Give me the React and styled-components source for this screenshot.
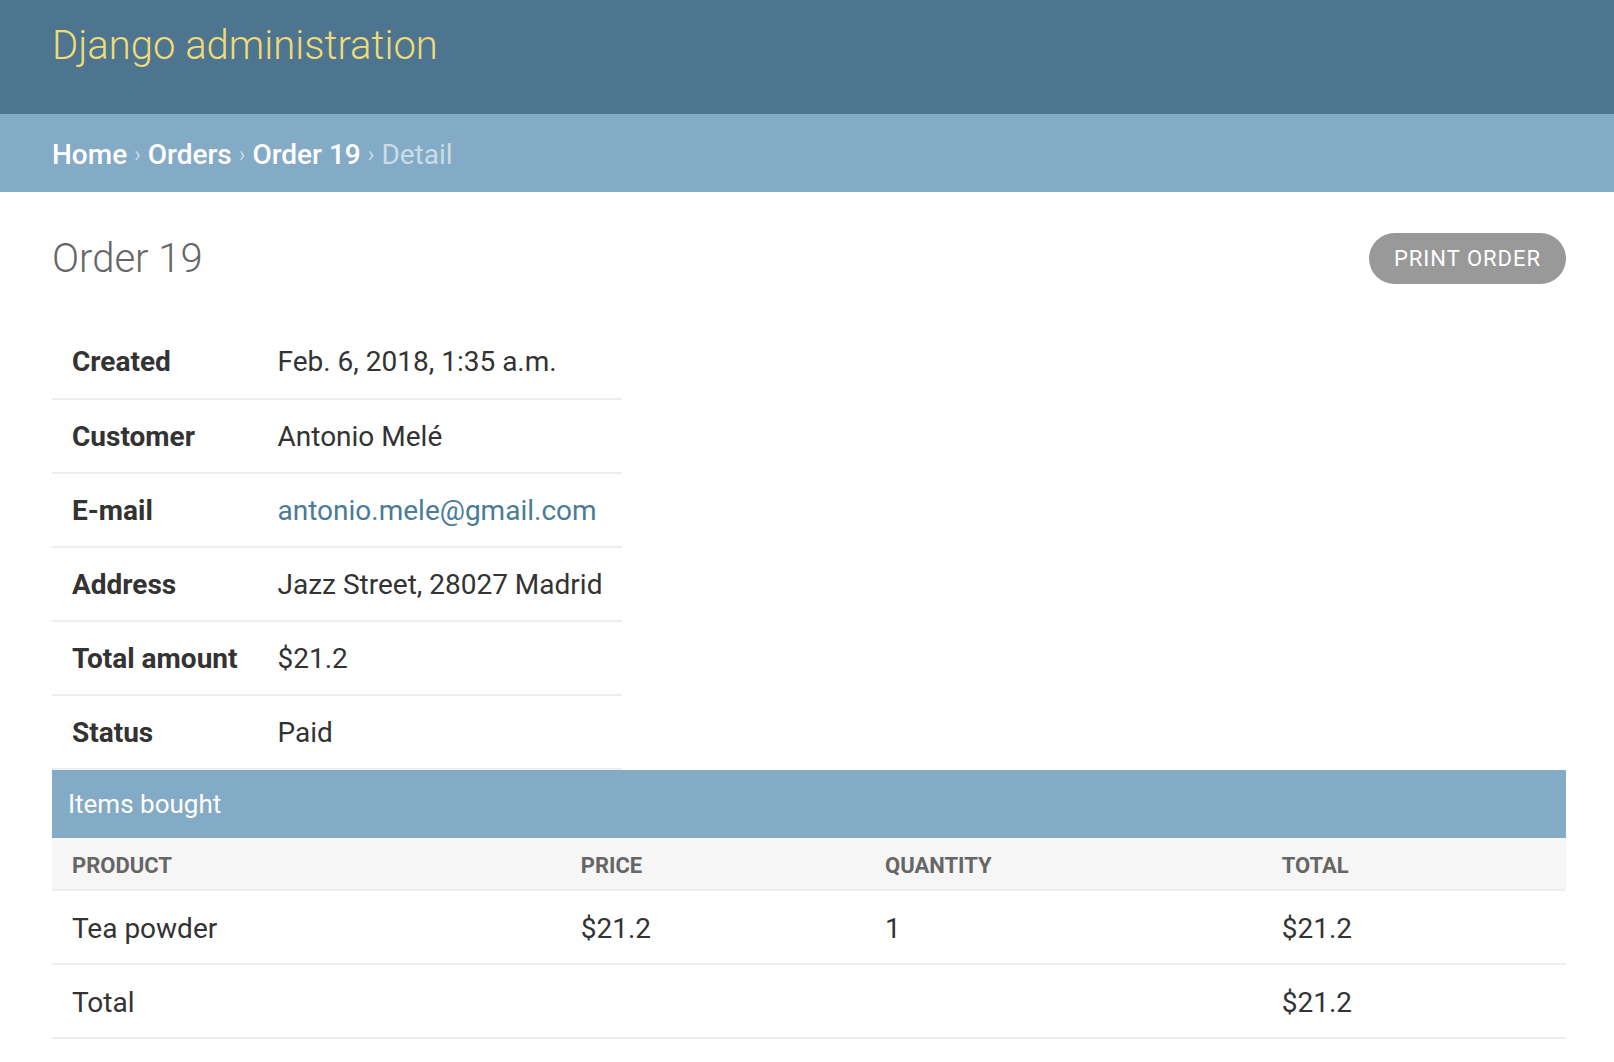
import React from "react";
import styled, { createGlobalStyle } from "styled-components";

const GlobalStyle = createGlobalStyle`
    html, body {
        margin: 0;
        padding: 0;
        background: #ffffff;
    }
    body {
        font-family: Roboto, "Liberation Sans", sans-serif;
        color: #333333;
    }
`

const Header = styled.header`
    display: flex;
    align-items: flex-start;
    height: 114px;
    padding: 0 52px;
    background-color: #4d7590;
    box-sizing: border-box;

    h1{
        margin: 19px 0 0 0;
        font-size: 40px;
        font-weight: 300;
        color: #f0db77;
        line-height: 54px;
    }
`

const Breadcrumbs = styled.nav`
    display: flex;
    align-items: center;
    gap: 7px;
    height: 78px;
    padding: 2px 52px 0;
    background-color: #84abc6;
    box-sizing: border-box;
    font-size: 28px;
    color: #c8dce9;

    a{
        color: #ffffff;
        text-decoration: none;
        font-weight: 500;
    }
    .sep{
        font-size: 22px;
    }
    .current{
        color: #c8dce9;
    }
`

const Content = styled.main`
    padding: 0 48px 0 52px;
`

const TitleRow = styled.div`
    display: flex;
    justify-content: space-between;
    align-items: center;
    height: 132px;

    h1{
        margin: 0;
        font-size: 40px;
        font-weight: 300;
        color: #666666;
    }
`

const PrintButton = styled.a`
    display: inline-flex;
    align-items: center;
    justify-content: center;
    height: 51px;
    width: 197px;
    border-radius: 26px;
    background-color: #999999;
    color: #ffffff;
    font-size: 22px;
    letter-spacing: 1px;
    text-transform: uppercase;
    text-decoration: none;
`

const DetailTable = styled.table`
    border-collapse: collapse;
    font-size: 28px;

    th, td{
        height: 72px;
        padding: 0 20px;
        text-align: left;
        border-bottom: 2px solid #eeeeee;
        white-space: nowrap;
    }
    th{
        font-weight: 700;
        color: #333333;
    }
    tr:first-child th, tr:first-child td{
        height: 74px;
    }
    a{
        color: #4a7b98;
        text-decoration: none;
    }
`

const ItemsTable = styled.table`
    width: 100%;
    border-collapse: collapse;
    font-size: 28px;

    caption{
        height: 68px;
        padding: 0 16px;
        text-align: left;
        background-color: #84abc6;
        color: #ffffff;
        font-size: 26px;
        line-height: 68px;
        caption-side: top;
    }
    thead th{
        height: 47px;
        padding: 4px 20px 0;
        background-color: #f6f6f6;
        color: #666666;
        font-size: 22px;
        font-weight: 700;
        text-transform: uppercase;
        text-align: left;
        border-bottom: 2px solid #eeeeee;
    }
    td{
        height: 70px;
        padding: 2px 20px 0;
        border-bottom: 2px solid #eeeeee;
        color: #333333;
    }
`

const details = [
    ["Created", "Feb. 6, 2018, 1:35 a.m."],
    ["Customer", "Antonio Melé"],
    ["E-mail", "antonio.mele@gmail.com", true],
    ["Address", "Jazz Street, 28027 Madrid"],
    ["Total amount", "$21.2"],
    ["Status", "Paid"],
]

const columns = [
    ["Product", "33.6%"],
    ["Price", "20.1%"],
    ["Quantity", "26.2%"],
    ["Total", "20.1%"],
]

const App = () => {
    return (
        <>
            <GlobalStyle />
            <Header>
                <h1>Django administration</h1>
            </Header>
            <Breadcrumbs>
                <a href="#">Home</a>
                <span className="sep">›</span>
                <a href="#">Orders</a>
                <span className="sep">›</span>
                <a href="#">Order 19</a>
                <span className="sep">›</span>
                <span className="current">Detail</span>
            </Breadcrumbs>
            <Content>
                <TitleRow>
                    <h1>Order 19</h1>
                    <PrintButton href="#">Print order</PrintButton>
                </TitleRow>
                <DetailTable>
                    <tbody>
                        {details.map(([label, value, isLink]) => (
                            <tr key={label}>
                                <th>{label}</th>
                                <td>{isLink ? <a href="#">{value}</a> : value}</td>
                            </tr>
                        ))}
                    </tbody>
                </DetailTable>
                <ItemsTable>
                    <caption>Items bought</caption>
                    <thead>
                        <tr>
                            {columns.map(([name, width]) => (
                                <th key={name} style={{ width }}>{name}</th>
                            ))}
                        </tr>
                    </thead>
                    <tbody>
                        <tr>
                            <td>Tea powder</td>
                            <td>$21.2</td>
                            <td>1</td>
                            <td>$21.2</td>
                        </tr>
                        <tr>
                            <td>Total</td>
                            <td></td>
                            <td></td>
                            <td>$21.2</td>
                        </tr>
                    </tbody>
                </ItemsTable>
            </Content>
        </>
    )
}

export default App
